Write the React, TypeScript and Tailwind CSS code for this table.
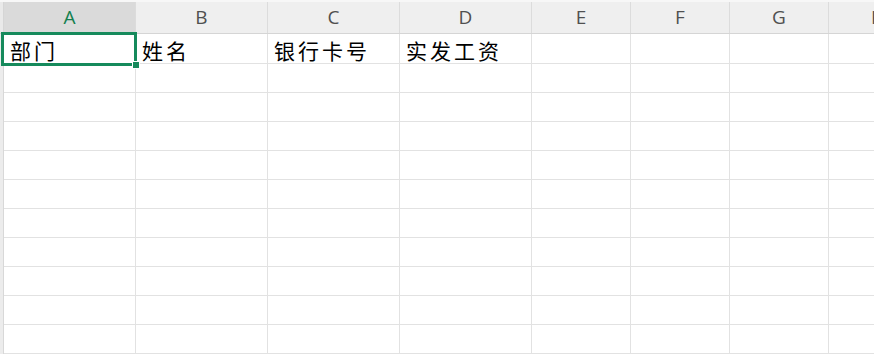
import React from "react";

const columns = [
  { key: "A", width: 132 },
  { key: "B", width: 132 },
  { key: "C", width: 132 },
  { key: "D", width: 132 },
  { key: "E", width: 99 },
  { key: "F", width: 99 },
  { key: "G", width: 99 },
  { key: "H", width: 99 },
];

const firstRow = ["部门", "姓名", "银行卡号", "实发工资"];
const rowHeights = [30, 29, 29, 29, 29, 29, 29, 29, 29, 29, 29];

const App = () => {
  return (
    <div className="relative w-[874px] h-[361px] overflow-hidden bg-white">
      <div className="h-[2px] bg-[#f7f7f7]" />
      {/* column headers */}
      <div className="flex h-[32px] border-b border-[#d5d5d5] bg-[#efefef]">
        <div className="w-[4px] shrink-0 border-r border-[#d5d5d5] bg-[#e9e9e9]" />
        {columns.map((col) => (
          <div
            key={col.key}
            style={{ width: col.width }}
            className={`shrink-0 flex items-center justify-center border-r border-[#dcdcdc] text-[19px] font-['Open_Sans',sans-serif] ${
              col.key === "A"
                ? "bg-[#dadada] text-[#137f4f]"
                : "text-[#505050]"
            }`}
          >
            {col.key}
          </div>
        ))}
      </div>

      {/* grid rows */}
      {rowHeights.map((h, r) => (
        <div key={r} style={{ height: h }} className="flex">
          <div className="w-[4px] shrink-0 border-r border-[#d8d8d8] bg-[#ececec]" />
          {columns.map((col, c) => (
            <div
              key={col.key}
              style={{ width: col.width }}
              className="shrink-0 flex items-end pl-[6px] border-r border-b border-[#e2e2e2] overflow-visible whitespace-nowrap"
            >
              {r === 0 && firstRow[c] && (
                <span className="text-[21px] leading-[26px] tracking-[3px] text-black font-['Noto_Sans_CJK_SC',sans-serif]">
                  {firstRow[c]}
                </span>
              )}
            </div>
          ))}
        </div>
      ))}

      {/* active cell outline with fill handle */}
      <div className="absolute left-[1px] top-[32px] w-[136px] h-[34px] border-[3px] border-[#168a5c] pointer-events-none">
        <div className="absolute right-[-6px] bottom-[-6px] w-[8px] h-[8px] bg-[#168a5c] border border-white" />
      </div>
    </div>
  );
};

export default App;
